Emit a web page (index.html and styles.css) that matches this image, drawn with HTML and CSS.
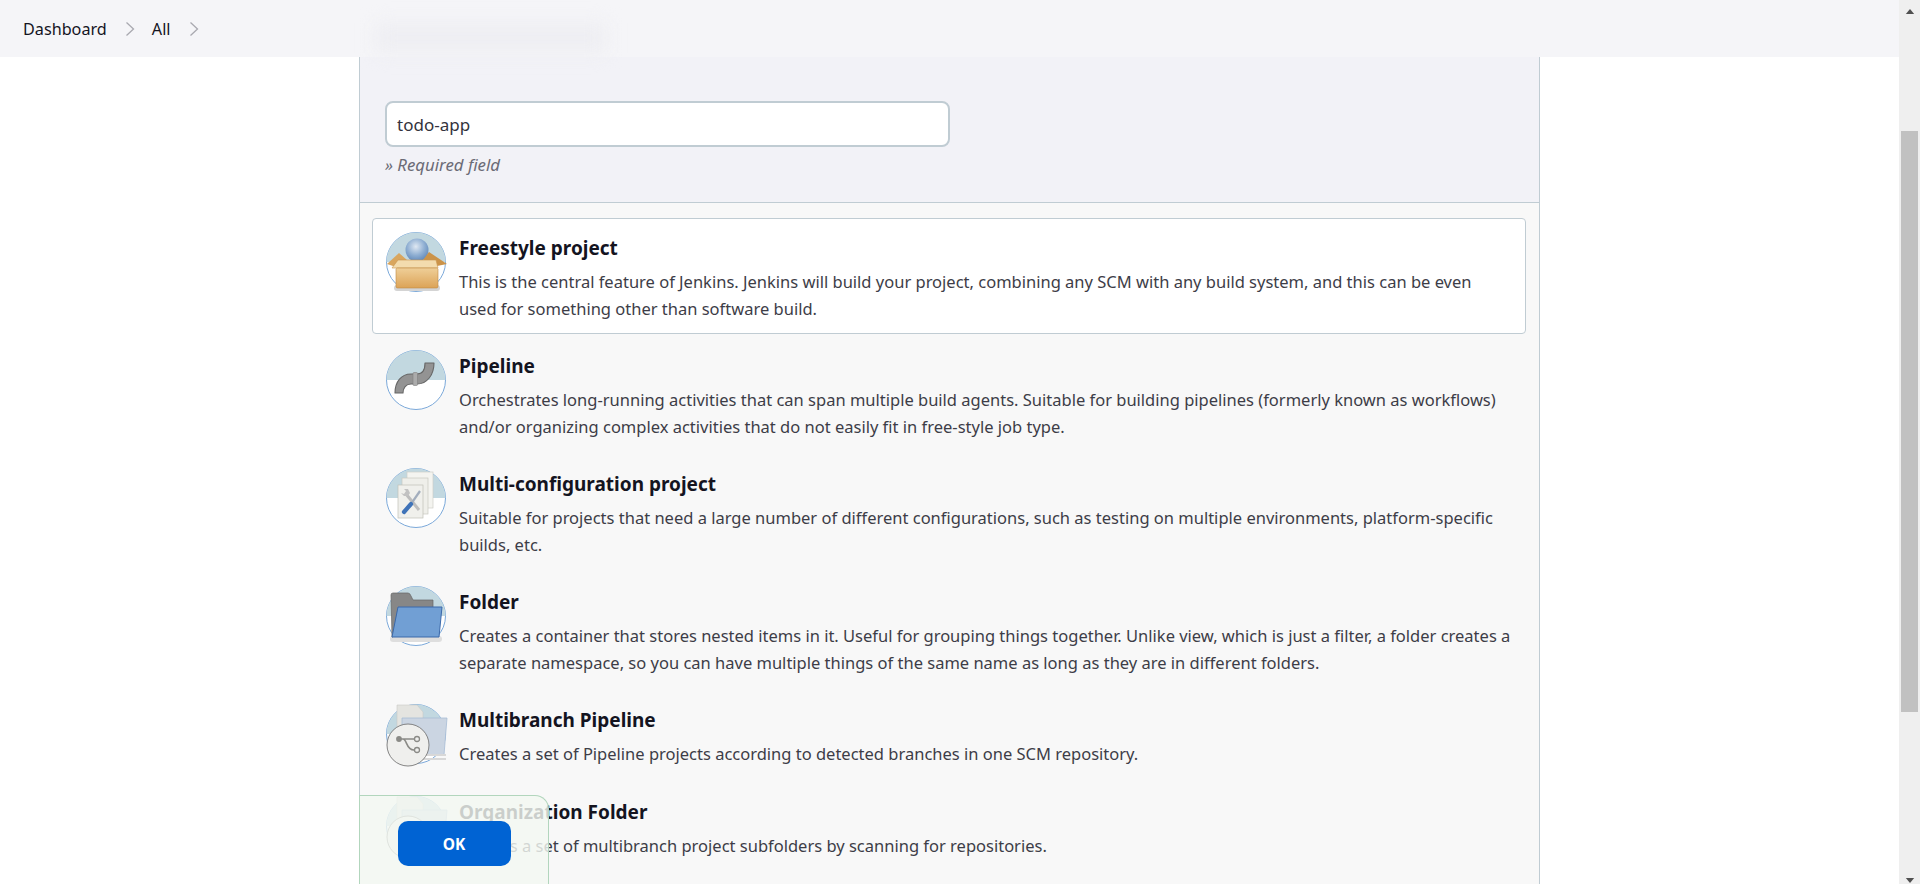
FILE: index.html
```html
<!DOCTYPE html>
<html lang="en">
<head>
<meta charset="utf-8">
<title>New Item</title>
<link rel="stylesheet" href="styles.css">
</head>
<body>
<div class="app">
  <div class="page">
    <header class="topbar">
      <nav class="crumbs">
        <a class="crumb">Dashboard</a>
        <svg class="chev" viewBox="0 0 10 16"><path d="M1.5 1.5 8.5 8l-7 6.5"/></svg>
        <a class="crumb">All</a>
        <svg class="chev" viewBox="0 0 10 16"><path d="M1.5 1.5 8.5 8l-7 6.5"/></svg>
      </nav>
      <div class="smudge"></div>
    </header>
    <main class="panel">
      <section class="name-section">
        <input class="name-input" type="text" value="todo-app">
        <div class="required">» Required field</div>
      </section>
      <section class="types">
        <article class="type selected">
          <svg class="ico" viewBox="0 0 60 60">
            <defs>
              <radialGradient id="ball" cx=".45" cy=".35" r=".7"><stop offset="0" stop-color="#dfe8f2"/><stop offset=".55" stop-color="#8eaed2"/><stop offset="1" stop-color="#5b83b5"/></radialGradient>
              <linearGradient id="box" x1="0" y1="0" x2="0" y2="1"><stop offset="0" stop-color="#efcf98"/><stop offset="1" stop-color="#dca357"/></linearGradient>
            </defs>
            <circle class="disc" cx="30" cy="30" r="29.5"/>
            <path class="sky" d="M.5 30a29.5 29.5 0 0 1 59 0z"/>
            <rect x="8" y="53" width="46" height="6" rx="3" fill="#d4d4d4"/>
            <circle cx="31" cy="18" r="11.5" fill="url(#ball)"/>
            <path d="M1 32 13 21l8 7-8 8z" fill="#d9a65e"/>
            <path d="M61 32 43 20l-6 8 14 6z" fill="#cb9349"/>
            <path d="M12 28h38l2 8H6z" fill="#f3dcae" stroke="#c9964f" stroke-width=".6"/>
            <rect x="10" y="36" width="42" height="20" rx="1.5" fill="url(#box)" stroke="#c18b45" stroke-width=".6"/>
          </svg>
          <div class="body">
            <h3>Freestyle project</h3>
            <p>This is the central feature of Jenkins. Jenkins will build your project, combining any SCM with any build system, and this can be even used for something other than software build.</p>
          </div>
        </article>
        <article class="type">
          <svg class="ico" viewBox="0 0 60 60">
            <circle class="disc" cx="30" cy="30" r="29.5"/>
            <path class="sky" d="M.5 30a29.5 29.5 0 0 1 59 0z"/>
            <path d="M9 43C9 32 15 24 25 24h6c5 0 8-4 8-11h9c0 12-7 21-17 21h-6c-5 0-8 4-8 9z" fill="#939393" stroke="#666" stroke-width="1.1" stroke-linejoin="round"/>
            <rect x="27" y="22.5" width="4.5" height="13" rx="1" fill="#ababab" stroke="#808080" stroke-width=".6"/>
          </svg>
          <div class="body">
            <h3>Pipeline</h3>
            <p>Orchestrates long-running activities that can span multiple build agents. Suitable for building pipelines (formerly known as workflows) and/or organizing complex activities that do not easily fit in free-style job type.</p>
          </div>
        </article>
        <article class="type">
          <svg class="ico" viewBox="0 0 60 60">
            <circle class="disc" cx="30" cy="30" r="29.5"/>
            <path class="sky" d="M.5 30a29.5 29.5 0 0 1 59 0z"/>
            <rect x="21" y="4" width="26" height="36" fill="#f4f4f0" stroke="#cfcfc8" stroke-width=".7"/>
            <rect x="16" y="10" width="26" height="36" fill="#efefea" stroke="#c8c8c0" stroke-width=".7"/>
            <rect x="12" y="17" width="25" height="33" fill="#f0f0ec" stroke="#c0c0b8" stroke-width=".7"/>
            <path d="M20 26 33 42" stroke="#bdbdbd" stroke-width="3" fill="none"/>
            <path d="M15 25l3 1 2-3-2-2 4 0 2 4-2 3-4 0z" fill="#c2c2c2"/>
            <path d="M34 23 25 36" stroke="#a3aebd" stroke-width="2.2"/>
            <path d="M25 36 18 44" stroke="#3f73b8" stroke-width="4.2" stroke-linecap="round"/>
          </svg>
          <div class="body">
            <h3>Multi-configuration project</h3>
            <p>Suitable for projects that need a large number of different configurations, such as testing on multiple environments, platform-specific builds, etc.</p>
          </div>
        </article>
        <article class="type">
          <svg class="ico" viewBox="0 0 60 60">
            <circle class="disc" cx="30" cy="30" r="29.5"/>
            <path class="sky" d="M.5 30a29.5 29.5 0 0 1 59 0z"/>
            <rect x="4" y="50" width="52" height="6" rx="3" fill="#dedede"/>
            <path d="M5 9q0-2 2-2h15q2 0 3 3l2 4h20v8H12L7 51H6z" fill="#878787" stroke="#666" stroke-width=".7"/>
            <path d="M12 21h44l-3 30H6z" fill="#719fd4" stroke="#3b69aa" stroke-width="1"/>
          </svg>
          <div class="body">
            <h3>Folder</h3>
            <p>Creates a container that stores nested items in it. Useful for grouping things together. Unlike view, which is just a filter, a folder creates a separate namespace, so you can have multiple things of the same name as long as they are in different folders.</p>
          </div>
        </article>
        <article class="type short">
          <svg class="ico" viewBox="0 0 60 60">
            <circle class="disc" cx="30" cy="30" r="29.5"/>
            <path class="sky" d="M.5 30a29.5 29.5 0 0 1 59 0z"/>
            <path d="M11 1h20l6 7v22H11z" fill="#e4e4e0" stroke="#cbcbc6" stroke-width=".6"/>
            <path d="M16 14h45l-3 37H16z" fill="#cbd5e2" stroke="#a7bcd6" stroke-width=".8"/>
            <path d="M34 50h26v2H34zM34 54h26v2H34z" fill="#d8d8d8"/>
            <circle cx="22" cy="41" r="21" fill="#efefed" stroke="#777" stroke-width=".9"/>
            <path d="M13 35h15M17 35c4 0 3 11 11 11" fill="none" stroke="#8a8a86" stroke-width="1.6"/>
            <circle cx="13" cy="35" r="2.9" fill="#8a8a86"/>
            <circle cx="31" cy="35" r="2.5" fill="#efefed" stroke="#8a8a86" stroke-width="1.3"/>
            <circle cx="31" cy="46" r="2.5" fill="#efefed" stroke="#8a8a86" stroke-width="1.3"/>
          </svg>
          <div class="body">
            <h3>Multibranch Pipeline</h3>
            <p>Creates a set of Pipeline projects according to detected branches in one SCM repository.</p>
          </div>
        </article>
        <article class="type short">
          <svg class="ico" viewBox="0 0 60 60">
            <circle class="disc" cx="30" cy="30" r="29.5"/>
            <path class="sky" d="M.5 30a29.5 29.5 0 0 1 59 0z"/>
            <path d="M11 1h20l6 7v22H11z" fill="#e4e4e0" stroke="#cbcbc6" stroke-width=".6"/>
            <path d="M16 14h45l-3 37H16z" fill="#cbd5e2" stroke="#a7bcd6" stroke-width=".8"/>
            <circle cx="22" cy="41" r="21" fill="#efefed" stroke="#777" stroke-width=".9"/>
            <path d="M15 47h14M18 47v-8h8v8" fill="none" stroke="#8a8a86" stroke-width="1.4"/>
          </svg>
          <div class="body">
            <h3>Organization Folder</h3>
            <p>Creates a set of multibranch project subfolders by scanning for repositories.</p>
          </div>
        </article>
      </section>
    </main>
    <div class="footer-bar">
      <button class="ok" type="button">OK</button>
    </div>
  </div>
  <aside class="scrollbar">
    <svg class="arrow" viewBox="0 0 10 6"><path d="M5 0 10 6H0z"/></svg>
    <div class="track"><div class="thumb"></div></div>
    <svg class="arrow" viewBox="0 0 10 6"><path d="M5 6 0 0h10z"/></svg>
  </aside>
</div>
</body>
</html>
```
FILE: styles.css
```css
* { box-sizing: border-box; }
html, body { margin: 0; height: 100%; overflow: hidden; }
body { background: #fff; color: #14141f; font-family: "Noto Sans", "Open Sans", sans-serif; font-size: 16px; }
.app { display: flex; height: 884px; }
.page { position: relative; flex: 1; min-width: 0; display: flex; flex-direction: column; overflow: hidden; }
.topbar { position: relative; flex: none; height: 57px; background: #f5f5f8; display: flex; align-items: center; padding-left: 23px; }
.crumbs { display: flex; align-items: center; font-size: 16.2px; color: #14141f; }
.chev { width: 10px; height: 16px; margin: 0 0 0 18px; fill: none; stroke: #a9a9b0; stroke-width: 1.3; }
.chev + .crumb { margin-left: 17px; }
.smudge { position: absolute; left: 376px; top: 23px; width: 230px; height: 30px; background: #eeeef2; filter: blur(9px); }
.panel { flex: 1; width: 1181px; margin-left: 359px; border-left: 1px solid #c0ccd3; border-right: 1px solid #c0ccd3; background: #f8f8f8; }
.name-section { height: 146px; padding: 44px 0 0 25px; background: #f2f2f7; border-bottom: 1px solid #c0ccd3; }
.name-input { display: block; width: 565px; height: 46px; padding: 0 10px; border: 2px solid #c0ccd3; border-radius: 8px; background: #fff; color: #33333d; font: 17px "Noto Sans", "Open Sans", sans-serif; }
.required { margin-top: 6px; font-size: 16.8px; font-style: italic; color: #6b6b76; }
.types { padding: 15px 13px 0 12px; }
.type { display: flex; height: 116px; margin-bottom: 2px; padding: 13px 13px 0 13px; border: 1px solid transparent; border-radius: 4px; }
.type.selected { background: #fff; border-color: #c0ccd3; }
.type.short { height: 90px; }
.ico { flex: none; width: 60px; height: 60px; overflow: visible; }
.disc { fill: #fff; stroke: #7ba9da; stroke-width: 1; }
.sky { fill: #c2d8e0; }
.body { margin: 4px 0 0 13px; flex: 1; }
.body h3 { margin: 0; font-size: 19px; line-height: 24px; font-weight: 700; color: #14141f; }
.body p { margin: 8px 0 0; font-size: 16.5px; line-height: 27px; color: #3d3d47; }
.footer-bar { position: absolute; left: 359px; bottom: -1px; width: 190px; height: 90px; display: flex; justify-content: center; padding: 25px 0 0 0; background: rgba(243, 248, 241, .82); border: 1px solid #b2d6bd; border-bottom: 0; border-radius: 0 14px 0 0; }
.ok { width: 113px; height: 45px; border: 0; border-radius: 10px; background: #0063d3; color: #fff; font: 700 15.5px "Noto Sans", "Open Sans", sans-serif; }
.scrollbar { flex: none; width: 21px; background: #efefef; display: flex; flex-direction: column; align-items: center; padding: 9px 0 1px; }
.arrow { width: 10px; height: 5px; flex: none; fill: #505050; }
.track { flex: 1; width: 100%; padding: 117px 2px 0; }
.thumb { height: 581px; background: #c1c1c1; }
```
